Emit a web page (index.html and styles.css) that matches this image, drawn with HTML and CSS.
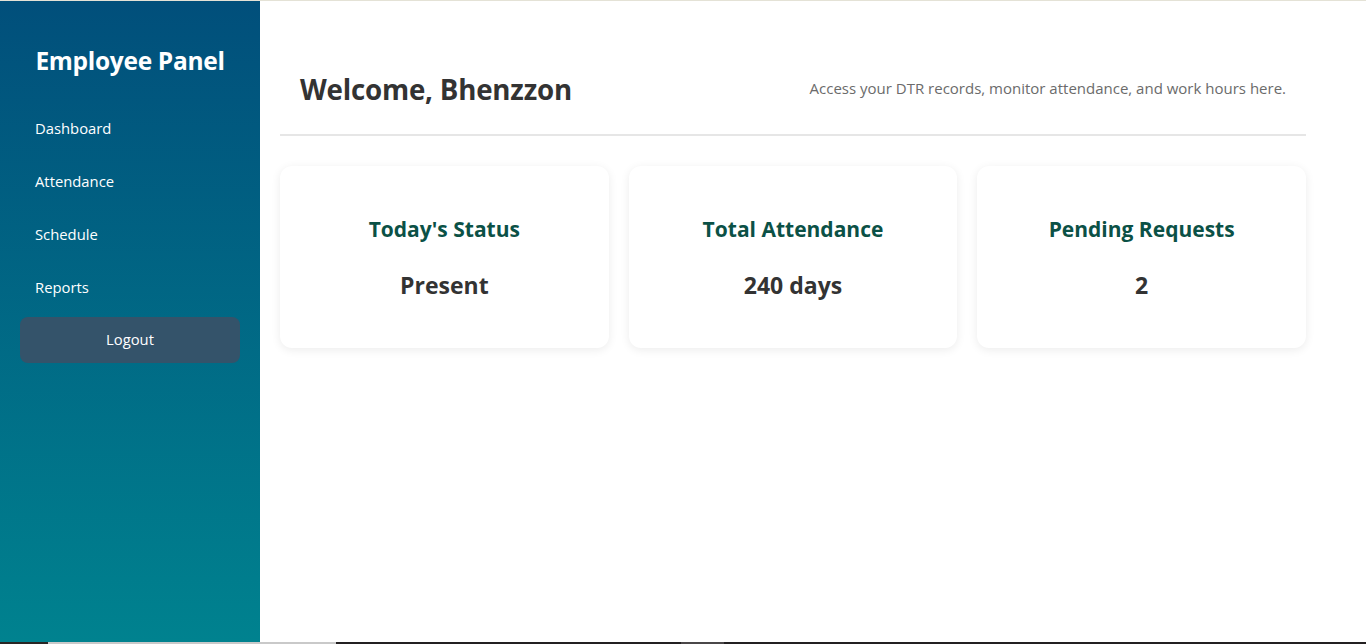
FILE: index.html
```html
<!DOCTYPE html>
<html lang="en">
<head>
<meta charset="utf-8">
<title>Employee Panel</title>
<link rel="stylesheet" href="styles.css">
</head>
<body>
<div class="topline"></div>
<div class="app">
  <aside class="sidebar">
    <h2 class="brand">Employee Panel</h2>
    <nav class="nav">
      <a class="nav-item" href="#">Dashboard</a>
      <a class="nav-item" href="#">Attendance</a>
      <a class="nav-item" href="#">Schedule</a>
      <a class="nav-item" href="#">Reports</a>
      <a class="logout" href="#">Logout</a>
    </nav>
  </aside>
  <main class="main">
    <header class="header">
      <h1 class="welcome">Welcome, Bhenzzon</h1>
      <p class="subtitle">Access your DTR records, monitor attendance, and work hours here.</p>
    </header>
    <section class="cards">
      <div class="card">
        <h3 class="card-title">Today's Status</h3>
        <p class="card-value">Present</p>
      </div>
      <div class="card">
        <h3 class="card-title">Total Attendance</h3>
        <p class="card-value">240 days</p>
      </div>
      <div class="card">
        <h3 class="card-title">Pending Requests</h3>
        <p class="card-value">2</p>
      </div>
    </section>
  </main>
</div>
<div class="taskbar">
  <span class="tb-dark tb-a"></span>
  <span class="tb-light"></span>
  <span class="tb-dark tb-b"></span>
  <span class="tb-gray"></span>
  <span class="tb-dark tb-c"></span>
</div>
</body>
</html>
```

FILE: styles.css
```css
* { box-sizing: border-box; }
html, body { margin: 0; padding: 0; height: 644px; overflow: hidden; }
body {
  font-family: "Open Sans", "Noto Sans", "Liberation Sans", sans-serif;
  background: #ffffff;
  color: #333;
  display: flex;
  flex-direction: column;
}
.topline { height: 1px; background: #e4e2d6; flex: none; }
.app { display: flex; height: 641px; flex: none; }
.sidebar {
  width: 260px;
  flex: none;
  background: linear-gradient(to bottom, #014f7b 0%, #00828f 100%);
  color: #fff;
  padding: 20px;
}
.brand {
  margin: 24px 0 0;
  font-size: 24.5px;
  line-height: 32px;
  font-weight: 700;
  text-align: center;
  letter-spacing: -0.3px;
}
.nav { display: flex; flex-direction: column; margin-top: 25px; }
.nav-item {
  color: #fff;
  text-decoration: none;
  font-size: 14.8px;
  line-height: 21px;
  padding: 16px 15px;
}
.logout {
  margin-top: 3px;
  background: #34536a;
  color: #fff;
  text-decoration: none;
  font-size: 14.8px;
  line-height: 21px;
  padding: 12px 15px 13px;
  border-radius: 8px;
  text-align: center;
}
.main { flex: 1; padding: 20px 60px 20px 20px; }
.header {
  display: flex;
  justify-content: space-between;
  align-items: center;
  padding: 50px 20px 27px;
  border-bottom: 2px solid #e6e6e6;
}
.welcome { margin: 0; font-size: 27.7px; line-height: 36px; font-weight: 700; color: #333; letter-spacing: -0.2px; }
.subtitle { margin: 0 0 2px; font-size: 15px; line-height: 20px; color: #6b6b6b; }
.cards {
  display: grid;
  grid-template-columns: repeat(3, 1fr);
  gap: 20px;
  margin-top: 30px;
}
.card {
  background: #fff;
  border-radius: 12px;
  box-shadow: 0 2px 10px rgba(0, 0, 0, 0.08);
  height: 182px;
  display: flex;
  flex-direction: column;
  align-items: center;
  padding-top: 49px;
}
.card-title { margin: 0; font-size: 21px; line-height: 28px; font-weight: 700; color: #0b5146; }
.card-value { margin: 28px 0 0; font-size: 23px; line-height: 28px; font-weight: 700; color: #333; }
.taskbar { height: 2px; display: flex; flex: none; }
.taskbar span { display: block; height: 2px; }
.tb-a { width: 48px; background: #2a2624; }
.tb-light { width: 288px; background: #c9c9c9; }
.tb-b { width: 345px; background: #232021; }
.tb-gray { width: 43px; background: #4a4748; }
.tb-c { flex: 1; background: #232021; }
```
